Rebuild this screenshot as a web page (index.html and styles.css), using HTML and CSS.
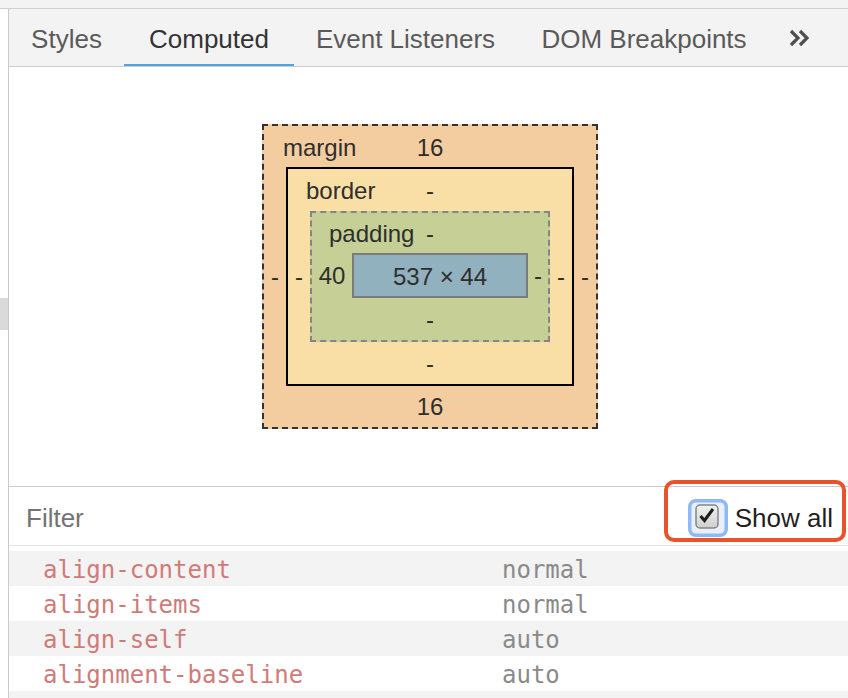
FILE: index.html
```html
<!DOCTYPE html>
<html>
<head>
<meta charset="utf-8">
<link rel="stylesheet" href="styles.css">
</head>
<body>
<div class="top-strip"></div>
<div class="main">
  <div class="gutter"><div class="gutter-thumb"></div></div>
  <div class="panel">
    <div class="tabs">
      <div class="tab t-styles">Styles</div>
      <div class="tab t-computed active">Computed</div>
      <div class="tab t-events">Event Listeners</div>
      <div class="tab t-dom">DOM Breakpoints</div>
      <div class="tab t-more">
        <svg width="22" height="18" viewBox="0 0 22 18"><polyline points="2,2 9,9 2,16" fill="none" stroke="#4f4f4f" stroke-width="3.2"/><polyline points="11,2 18,9 11,16" fill="none" stroke="#4f4f4f" stroke-width="3.2"/></svg>
      </div>
    </div>

    <div class="boxmodel-area">
      <div class="bm bm-margin">
        <div class="bm-top"><span class="bm-label lbl-margin">margin</span><span>16</span><span></span></div>
        <div class="bm-side">-</div>
        <div class="bm bm-border">
          <div class="bm-top"><span class="bm-label lbl-border">border</span><span>-</span><span></span></div>
          <div class="bm-side">-</div>
          <div class="bm bm-padding">
            <div class="bm-top"><span class="bm-label lbl-padding">padding</span><span>-</span><span></span></div>
            <div class="bm-side">40</div>
            <div class="bm-content">537 × 44</div>
            <div class="bm-side">-</div>
            <div class="bm-bottom">-</div>
          </div>
          <div class="bm-side">-</div>
          <div class="bm-bottom">-</div>
        </div>
        <div class="bm-side">-</div>
        <div class="bm-bottom">16</div>
      </div>
    </div>

    <div class="filter-bar">
      <div class="filter-label">Filter</div>
      <label class="showall">
        <span class="annot"></span>
        <svg width="40" height="38" viewBox="0 0 40 38">
          <rect x="1.75" y="1.75" width="36.5" height="34.5" rx="6" fill="#e9f0fb" stroke="#8db9f6" stroke-width="3.5"/>
          <defs><linearGradient id="cbg" x1="0" y1="0" x2="0" y2="1"><stop offset="0" stop-color="#f2f2f2"/><stop offset="1" stop-color="#cfcfcf"/></linearGradient></defs>
          <rect x="8" y="6" width="22" height="23" rx="4" fill="url(#cbg)" stroke="#858585" stroke-width="1.5"/>
          <path d="M12.5 17 L16.5 21.5 L25 10" fill="none" stroke="#1e1e1e" stroke-width="3"/>
        </svg>
        <span class="showall-text">Show all</span>
      </label>
    </div>

    <div class="props">
      <div class="prop"><span class="prop-name">align-content</span><span class="prop-value">normal</span></div>
      <div class="prop"><span class="prop-name">align-items</span><span class="prop-value">normal</span></div>
      <div class="prop"><span class="prop-name">align-self</span><span class="prop-value">auto</span></div>
      <div class="prop"><span class="prop-name">alignment-baseline</span><span class="prop-value">auto</span></div>
      <div class="prop"></div>
    </div>
  </div>
</div>
</body>
</html>
```

FILE: styles.css
```css
html, body {
  margin: 0;
  padding: 0;
}

body {
  width: 848px;
  height: 698px;
  overflow: hidden;
  background: #ffffff;
  font-family: "Liberation Sans", Arial, sans-serif;
}

.top-strip {
  height: 8px;
  background: #f3f3f3;
  border-bottom: 1px solid #cfcfcf;
}

.main {
  display: flex;
  height: 689px;
}

.gutter {
  width: 8px;
  flex: none;
  border-right: 1px solid #cbcbcb;
  padding-top: 289px;
  background: #ffffff;
}

.gutter-thumb {
  height: 32px;
  background: #dadada;
}

.panel {
  flex: 1;
  min-width: 0;
  display: flex;
  flex-direction: column;
}

/* Tabs */
.tabs {
  display: flex;
  height: 57px;
  background: #f3f3f3;
  border-bottom: 1px solid #cccccc;
  flex: none;
}

.tab {
  display: flex;
  align-items: center;
  justify-content: center;
  height: 100%;
  box-sizing: border-box;
  padding-top: 3px;
  font-size: 26px;
  color: #5a5a5a;
  white-space: nowrap;
}

.t-styles { width: 115px; }
.t-computed { width: 170px; }
.t-events { width: 223px; }
.t-dom { width: 254px; }

.t-more {
  justify-content: flex-start;
  padding-left: 18px;
  padding-top: 1px;
}

.tab.active {
  color: #333333;
  box-shadow: inset 0 -2px 0 #52a2e0;
}

/* Box model */
.boxmodel-area {
  height: 420px;
  flex: none;
  display: flex;
  align-items: center;
  justify-content: center;
  padding-left: 3px;
  box-sizing: border-box;
  border-bottom: 1px solid #cccccc;
  font-size: 24px;
  color: #2e2e2e;
}

.bm {
  display: grid;
  box-sizing: border-box;
}

.bm-margin {
  grid-template-columns: 22px auto 22px;
  grid-template-rows: 41px auto 41px;
  border: 2px dashed #333333;
  background: #f3cda0;
}

.bm-border {
  grid-template-columns: 22px auto 22px;
  grid-template-rows: 42px auto 42px;
  border: 2px solid #000000;
  background: #f9dea6;
}

.bm-padding {
  grid-template-columns: 40px auto 20px;
  grid-template-rows: 40px auto 42px;
  border: 2px dashed #858585;
  background: #c6d096;
}

.bm-top {
  grid-column: 1 / -1;
  display: grid;
  grid-template-columns: 1fr auto 1fr;
  align-items: center;
  padding-top: 2px;
  white-space: nowrap;
}

.lbl-margin { padding-left: 19px; }
.lbl-border { padding-left: 18px; }
.lbl-padding { padding-left: 17px; }

.bm-side {
  display: flex;
  align-items: center;
  justify-content: center;
  padding-top: 1px;
}

.bm-bottom {
  grid-column: 1 / -1;
  display: flex;
  align-items: center;
  justify-content: center;
  padding-top: 1px;
}

.bm-content {
  width: 176px;
  height: 45px;
  box-sizing: border-box;
  border: 2px solid #7b7b7b;
  background: #92b1be;
  display: flex;
  align-items: center;
  justify-content: center;
  padding-top: 2px;
  white-space: nowrap;
}

/* Filter bar */
.filter-bar {
  height: 58px;
  flex: none;
  box-sizing: content-box;
  display: flex;
  align-items: center;
  justify-content: space-between;
  padding: 4px 15px 0 17px;
  height: 54px;
  border-bottom: 1px solid #e3e3e3;
}

.filter-label {
  font-size: 26px;
  color: #737373;
}

.showall {
  position: relative;
  display: flex;
  align-items: center;
  gap: 7px;
  height: 38px;
  font-size: 26px;
  color: #1f1f1f;
}

.showall svg {
  display: block;
}

.annot {
  position: absolute;
  left: -24px;
  right: -13px;
  top: -19px;
  bottom: -5px;
  border: 4px solid #e8532c;
  border-radius: 10px;
}

/* Property list */
.props {
  padding-top: 5px;
}

.prop {
  display: grid;
  grid-template-columns: 459px 1fr;
  align-items: center;
  height: 35px;
  box-sizing: border-box;
  padding-top: 3px;
  padding-left: 34px;
  font-family: "DejaVu Sans Mono", "Liberation Mono", monospace;
  font-size: 24px;
  white-space: nowrap;
}

.prop:nth-child(odd) {
  background: #f3f3f3;
}

.prop-name {
  color: #cf7b78;
}

.prop-value {
  color: #8a8a8a;
}
```
